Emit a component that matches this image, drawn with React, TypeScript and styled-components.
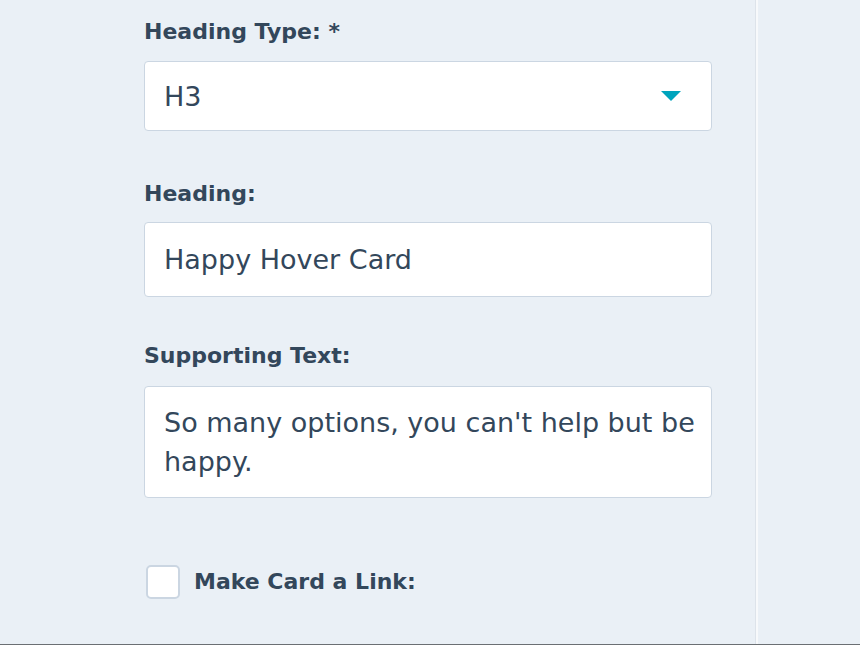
import React from "react";
import styled, { createGlobalStyle } from "styled-components";

const Global = createGlobalStyle`
  html, body { margin: 0; padding: 0; background: #eaf0f6; }
  body { font-family: "DejaVu Sans", "Open Sans", sans-serif; color: #33475b; }
  * { box-sizing: border-box; }
`;

const Page = styled.div`
  display: flex;
  width: 860px;
  height: 645px;
  border-bottom: 1px solid #6b6f73;
  background: #eaf0f6;
  overflow: hidden;
`;

const Panel = styled.div`
  width: 756px;
  flex: none;
  padding: 17px 0 0 144px;
  border-right: 1px solid #dde3ea;
  display: flex;
  flex-direction: column;
`;

const Side = styled.div`
  flex: 1;
  border-left: 2px solid #f7f9fb;
`;

const Field = styled.div<{ $gap: number; $after: number }>`
  display: flex;
  flex-direction: column;
  gap: ${(p) => p.$gap}px;
  width: 568px;
  margin-bottom: ${(p) => p.$after}px;
`;

const Label = styled.label`
  font-size: 22px;
  line-height: 30px;
  font-weight: 700;
  color: #33475b;
`;

const Box = styled.div<{ $h: number }>`
  min-height: ${(p) => p.$h}px;
  background: #fff;
  border: 1px solid #cbd6e2;
  border-radius: 4px;
  padding: 0 20px 0 19px;
  font-size: 27px;
  color: #33475b;
  display: flex;
  align-items: center;
  justify-content: space-between;
`;

const TextBox = styled.div`
  min-height: 112px;
  background: #fff;
  border: 1px solid #cbd6e2;
  border-radius: 4px;
  padding: 16px 8px 16px 19px;
  font-size: 27px;
  line-height: 39px;
  color: #33475b;
`;

const Arrow = styled.span`
  width: 0;
  height: 0;
  border-left: 10px solid transparent;
  border-right: 10px solid transparent;
  border-top: 10px solid #00a4bd;
  margin-right: 10px;
`;

const CheckRow = styled.div`
  display: flex;
  align-items: center;
  gap: 14px;
  margin-top: 67px;
  padding-left: 2px;
`;

const Check = styled.span`
  width: 34px;
  height: 34px;
  background: #fff;
  border: 2px solid #cbd6e2;
  border-radius: 5px;
`;

export default function App() {
  return (
    <>
      <Global />
      <Page>
        <Panel>
          <Field $gap={14} $after={48}>
            <Label>Heading Type: *</Label>
            <Box $h={70}>
              <span>H3</span>
              <Arrow />
            </Box>
          </Field>
          <Field $gap={13} $after={44}>
            <Label>Heading:</Label>
            <Box $h={75}>
              <span>Happy Hover Card</span>
            </Box>
          </Field>
          <Field $gap={15} $after={0}>
            <Label>Supporting Text:</Label>
            <TextBox>So many options, you can't help but be happy.</TextBox>
          </Field>
          <CheckRow>
            <Check />
            <Label>Make Card a Link:</Label>
          </CheckRow>
        </Panel>
        <Side />
      </Page>
    </>
  );
}
